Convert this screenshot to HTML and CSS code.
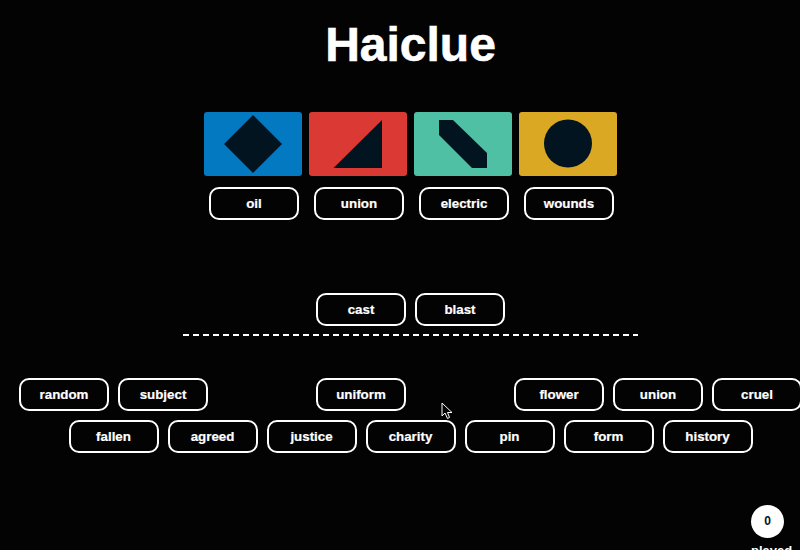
FILE: index.html
```html
<!DOCTYPE html>
<html lang="en">
<head>
    <meta charset="UTF-8">
    <meta name="viewport" content="width=device-width, initial-scale=1.0">
    <title>Haiclue</title>
    <link rel="stylesheet" href="styles.css">
</head>
<body>
    <div class="board">
        <h1>Haiclue</h1>

        <div class="clues">
            <div class="clue">
                <div class="card blue">
                    <svg viewBox="0 0 64 64"><polygon points="32,3 61,32 32,61 3,32"/></svg>
                </div>
                <div class="word">oil</div>
            </div>
            <div class="clue">
                <div class="card red">
                    <svg viewBox="0 0 64 64"><polygon points="56,8 56,56 7.5,56"/></svg>
                </div>
                <div class="word">union</div>
            </div>
            <div class="clue">
                <div class="card teal">
                    <svg viewBox="0 0 64 64"><polygon points="8,8 22,8 56,41 56,56 41,56 8,23"/></svg>
                </div>
                <div class="word">electric</div>
            </div>
            <div class="clue">
                <div class="card yellow">
                    <svg viewBox="0 0 64 64"><circle cx="32" cy="31.5" r="24"/></svg>
                </div>
                <div class="word">wounds</div>
            </div>
        </div>

        <div class="row answer">
            <div class="word">cast</div>
            <div class="word">blast</div>
        </div>
        <div class="divider"></div>

        <div class="row pool">
            <div class="word">random</div>
            <div class="word">subject</div>
            <div class="slot"></div>
            <div class="word">uniform</div>
            <div class="slot"></div>
            <div class="word">flower</div>
            <div class="word">union</div>
            <div class="word">cruel</div>
        </div>
        <div class="row pool">
            <div class="word">fallen</div>
            <div class="word">agreed</div>
            <div class="word">justice</div>
            <div class="word">charity</div>
            <div class="word">pin</div>
            <div class="word">form</div>
            <div class="word">history</div>
        </div>
    </div>

    <div class="played">
        <div class="count">0</div>
        <div class="played-label">played</div>
    </div>

    <svg class="cursor" viewBox="0 0 13 18">
        <path d="M1 1 L1 14 L4 11 L6.5 16.5 L8.5 15.5 L6.5 10.5 L11 10.5 Z"/>
    </svg>
</body>
</html>
```

FILE: styles.css
```css
html, body {
    height: 100%;
}
body {
    margin: 0;
    background: #030303;
    color: #fff;
    font-family: "Liberation Sans", Arial, sans-serif;
    overflow: hidden;
    position: relative;
}
.board {
    width: 821px;
    display: flex;
    flex-direction: column;
    align-items: center;
}
h1 {
    margin: 17px 0 0;
    font-size: 48px;
    line-height: 55px;
    font-weight: bold;
    -webkit-text-stroke: 0.6px #fff;
}
.clues {
    display: flex;
    gap: 7px;
    margin-top: 40px;
}
.clue {
    width: 98px;
}
.card {
    width: 98px;
    height: 64px;
    border-radius: 3px;
    display: flex;
    justify-content: center;
}
.card svg {
    width: 64px;
    height: 64px;
    fill: #02141f;
}
.blue { background: #0279c0; }
.red { background: #db3a34; }
.teal { background: #50c0a5; }
.yellow { background: #dba823; }
.word {
    box-sizing: border-box;
    width: 90px;
    height: 33px;
    flex: none;
    border: 2px solid #fff;
    border-radius: 10px;
    background: #030303;
    font-size: 13.33px;
    font-weight: bold;
    line-height: 29px;
    text-align: center;
    -webkit-text-stroke: 0.2px #fff;
}
.clue .word {
    margin: 11px 0 0 5px;
}
.row {
    display: flex;
    justify-content: center;
    gap: 9px;
}
.slot {
    width: 90px;
    flex: none;
}
.answer {
    margin-top: 73px;
}
.divider {
    width: 455px;
    height: 2px;
    margin-top: 8px;
    background: repeating-linear-gradient(90deg, #fff 0 6px, transparent 6px 10px);
}
.pool {
    margin-top: 9px;
}
.divider + .pool {
    margin-top: 42px;
}
.played {
    position: absolute;
    top: 505px;
    left: 751px;
    width: 49px;
}
.count {
    width: 33px;
    height: 33px;
    border-radius: 50%;
    background: #fff;
    color: #02141f;
    font-size: 12px;
    font-weight: bold;
    line-height: 33px;
    text-align: center;
}
.played-label {
    margin-top: 5px;
    font-size: 13px;
    font-weight: bold;
}
.cursor {
    position: absolute;
    top: 402px;
    left: 441px;
    width: 13px;
    height: 18px;
    fill: #030303;
    stroke: #fff;
    stroke-width: 1;
}
```
